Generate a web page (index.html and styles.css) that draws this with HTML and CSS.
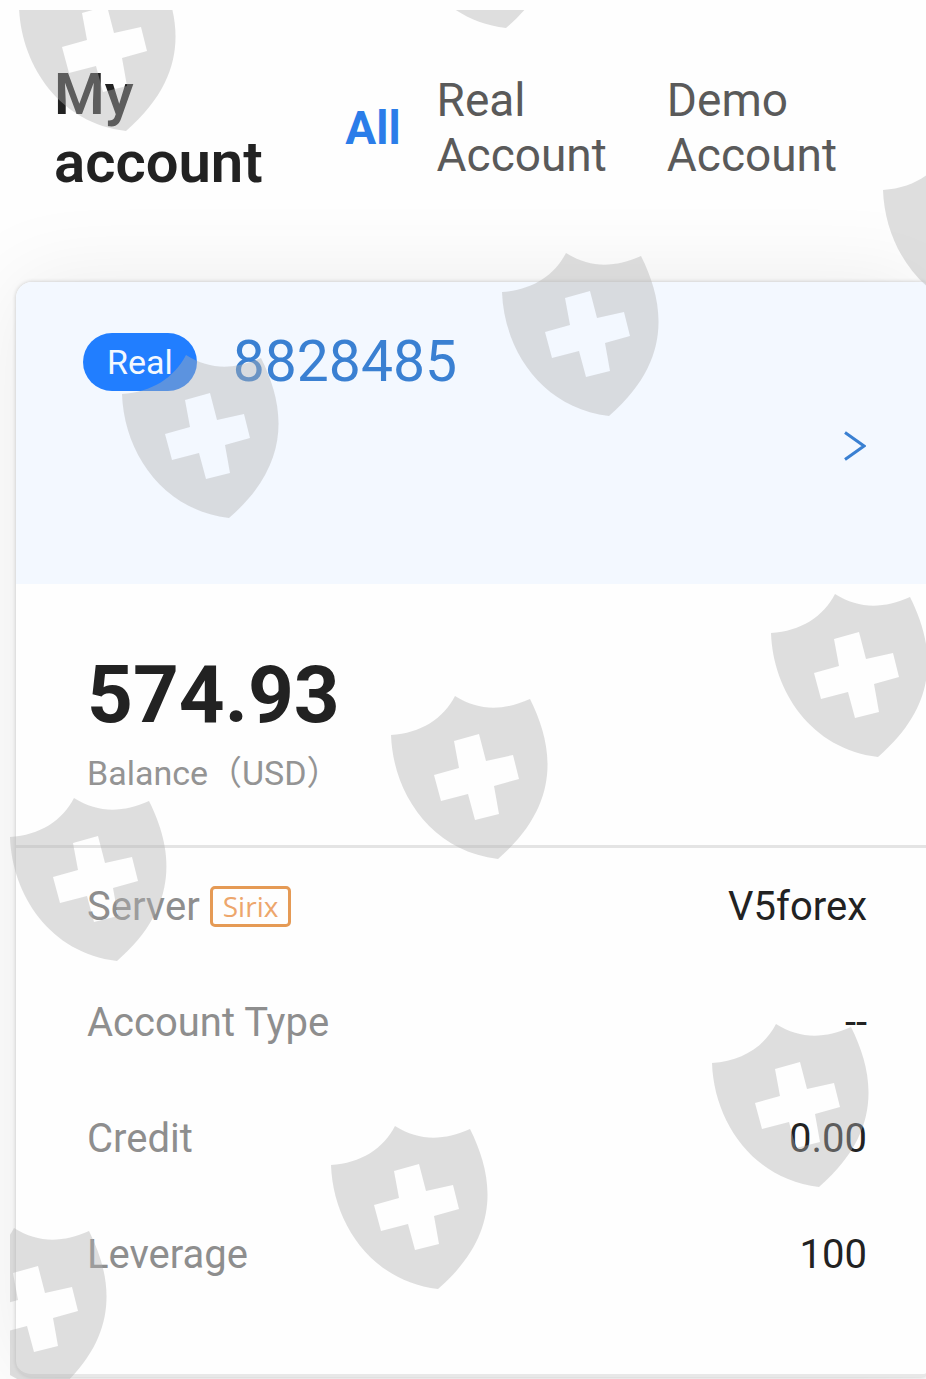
FILE: index.html
```html
<!DOCTYPE html>
<html lang="en">
<head>
  <meta charset="UTF-8" />
  <meta name="viewport" content="width=device-width,initial-scale=1" />
  <title>My account</title>
  <link rel="stylesheet" href="styles.css">
</head>
<body>
  <div class="page">
    <header class="header">
      <h1>My account</h1>
      <nav class="tabs">
        <button type="button" class="tab active">All</button>
        <button type="button" class="tab">Real Account</button>
        <button type="button" class="tab">Demo Account</button>
      </nav>
    </header>

    <main class="card">
      <a class="card-head" href="#8828485">
        <span class="account">
          <span class="badge">Real</span>
          <span class="number">8828485</span>
        </span>
        <svg class="chevron" viewBox="0 0 22 30" aria-hidden="true"><path d="M1 1.5 L20 15 L1 28.5" /></svg>
      </a>

      <section class="balance">
        <p class="amount">574.93</p>
        <p class="caption">Balance（USD）</p>
      </section>

      <dl class="details">
        <div class="row"><dt>Server <span class="tag">Sirix</span></dt><dd>V5forex</dd></div>
        <div class="row"><dt>Account Type</dt><dd>--</dd></div>
        <div class="row"><dt>Credit</dt><dd>0.00</dd></div>
        <div class="row"><dt>Leverage</dt><dd>100</dd></div>
      </dl>
    </main>

    <!-- shield watermark over the whole page -->
    <svg class="watermark" aria-hidden="true">
      <defs>
        <path id="shield" fill-rule="evenodd" d="M0 40 C30 38 52 24 64 1 C88 16 112 16 139 4 C162 50 172 108 107 164 C40 156 2 98 0 40 Z M63 46 L88 39 L95 66 L122 60 L128 84 L103 91 L108 119 L84 125 L77 99 L50 106 L43 80 L68 73 Z" />
      </defs>
      <use href="#shield" x="9" y="-43" />
      <use href="#shield" x="389" y="-146" />
      <use href="#shield" x="873" y="140" />
      <use href="#shield" x="492" y="242" />
      <use href="#shield" x="112" y="344" />
      <use href="#shield" x="761" y="583" />
      <use href="#shield" x="381" y="685" />
      <use href="#shield" x="0" y="787" />
      <use href="#shield" x="702" y="1013" />
      <use href="#shield" x="321" y="1115" />
      <use href="#shield" x="-60" y="1217" />
    </svg>
  </div>
</body>
</html>
```

FILE: styles.css
```css
* { box-sizing: border-box; }
body { margin: 0; background: #fefefe; color: #222; font-family: Roboto, "Noto Sans CJK SC", sans-serif; }
h1, p, dl, dd { margin: 0; }

.page { position: relative; overflow: hidden; padding-bottom: 2px; }

.header { display: flex; align-items: center; justify-content: space-between; padding: 60px 89px 86px 54px; }
.header h1 { flex: 0 1 220px; font-size: 58px; line-height: 68px; font-weight: 600; }
.tabs { display: flex; align-items: center; gap: 36px; }
.tab { padding: 0; border: none; background: none; color: #5a5a5a; font: inherit; font-size: 46px; line-height: 55px; text-align: left; cursor: pointer; }
.tab:not(.active) { width: min-content; }
.tab + .tab + .tab { margin-left: 24px; }
.tab.active { color: #2b7de9; font-weight: 700; }

.card { margin-left: 16px; background: #fefefe; border-bottom: 3px solid #e8e8e8; border-radius: 16px 4px 4px 16px; box-shadow: 0 0 4px rgba(0, 0, 0, 0.2), 0 0 90px rgba(0, 0, 0, 0.08); }

.card-head { display: flex; align-items: center; justify-content: space-between; min-height: 302px; padding: 50px 60px 24px 67px; border-radius: 16px 4px 0 0; background: #f3f8ff; color: #3a80d2; text-decoration: none; }
.account { display: flex; align-items: center; align-self: flex-start; gap: 36px; }
.badge { padding: 0 24px; border-radius: 29px; background: #217eff; color: #f3f8ff; font-size: 34px; line-height: 58px; }
.number { font-size: 57px; line-height: 60px; }
.chevron { width: 22px; height: 30px; fill: none; stroke: #3a80d2; stroke-width: 3; }

.balance { padding: 65px 60px 47px 71px; border-bottom: 3px solid #e4e4e4; }
.amount { margin-bottom: 7px; font-size: 80px; line-height: 92px; font-weight: 700; }
.caption { color: #949494; font-size: 34px; line-height: 50px; }

.details { padding: 0 59px 62px 71px; }
.row { display: flex; align-items: center; justify-content: space-between; height: 116px; font-size: 40px; }
.row dt { display: flex; align-items: center; gap: 10px; color: #8e8e8e; }
.tag { padding: 0 10px; border: 3px solid #e59a55; border-radius: 5px; color: #eda66c; font-family: "Open Sans", sans-serif; font-size: 28px; line-height: 35px; }

.watermark { position: absolute; top: 10px; left: 10px; width: calc(100% - 10px); height: calc(100% - 10px); fill: rgba(178, 178, 178, 0.41); pointer-events: none; }
```
